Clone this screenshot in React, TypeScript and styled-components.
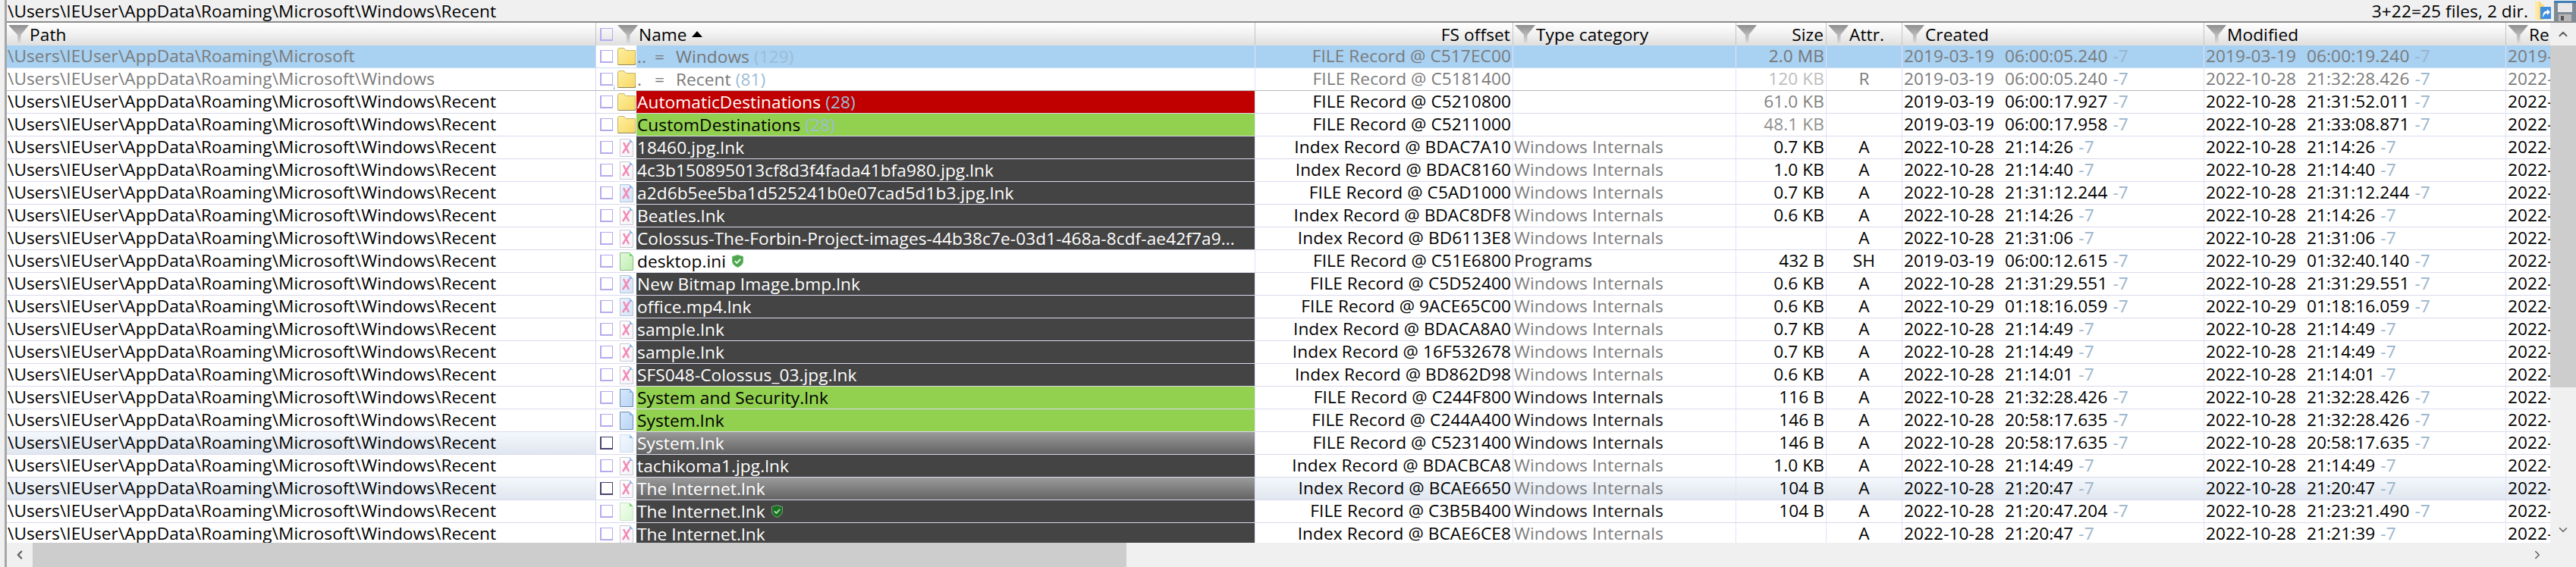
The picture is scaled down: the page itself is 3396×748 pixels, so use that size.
import React from 'react';
import styled, { createGlobalStyle, css } from 'styled-components';
import { ChevronUp, ChevronDown, ChevronLeft, ChevronRight } from 'lucide-react';

const GlobalStyle = createGlobalStyle`
    html, body {
        margin: 0;
        padding: 0;
        background: #f0f0f0;
        overflow: hidden;
    }
`;

const COLUMNS = '776px 869px 340px 294px 119px 100px 398px 398px 1fr';

const Shell = styled.div`
    width: 3396px;
    height: 748px;
    box-sizing: border-box;
    padding-left: 6px;
    display: flex;
    flex-direction: column;
    background: #f0f0f0;
    color: #000;
    font-family: 'Open Sans', 'Noto Sans', sans-serif;
    font-size: 22.67px;
    letter-spacing: 0.08px;
    overflow: hidden;
`;

const Frame = styled.div`
    flex: 1;
    min-height: 0;
    display: flex;
    flex-direction: column;
    border-left: 3px solid #a6a6a6;
`;

const TopBar = styled.div`
    height: 28px;
    flex: none;
    display: flex;
    align-items: center;
    padding-left: 1px;
    border-bottom: 2px solid #8c8c8c;
    white-space: nowrap;
`;

const TopStats = styled.div`
    margin-left: auto;
    margin-right: 8px;
`;

const TopIcons = styled.div`
    display: flex;
    align-items: center;
    gap: 4px;
`;

const Main = styled.div`
    flex: 1;
    min-height: 0;
    display: flex;
`;

const TableArea = styled.div`
    flex: 1;
    min-width: 0;
    display: flex;
    flex-direction: column;
`;

const Table = styled.div`
    flex: 1;
    min-height: 0;
    overflow: hidden;
    background: #fff;
`;

const HeaderRow = styled.div`
    height: 30px;
    display: grid;
    grid-template-columns: ${COLUMNS};
    background: linear-gradient(#ffffff, #f4f4f4 40%, #dfdfdf);
`;

const HeaderCell = styled.div<{ $right?: boolean }>`
    position: relative;
    display: flex;
    align-items: center;
    gap: 1px;
    padding: 0 3px 0 2px;
    border-left: 1px solid #c4c4c4;
    justify-content: ${(p) => (p.$right ? 'flex-end' : 'flex-start')};
    overflow: hidden;
    white-space: nowrap;

    &:first-child {
        border-left: 0;
    }
`;

const SizeFunnel = styled.div`
    position: absolute;
    left: 0;
    top: 3px;
    display: flex;
`;

const SortMark = styled.span`
    width: 0;
    height: 0;
    margin-left: 5px;
    border-left: 7px solid transparent;
    border-right: 7px solid transparent;
    border-bottom: 8px solid #000;
`;

const Row = styled.div<{ $selected?: boolean; $line: 'soft' | 'blue' | 'grey' }>`
    height: 30px;
    box-sizing: border-box;
    display: grid;
    grid-template-columns: ${COLUMNS};
    background: ${(p) => (p.$selected ? '#a8d1f2' : '#fff')};
    border-bottom: 1px solid
        ${(p) => (p.$line === 'grey' ? '#b9b9c2' : p.$line === 'blue' ? '#c9dff3' : '#dadaee')};
`;

const bandStyle = css`
    background: linear-gradient(#f4f8fc, #e0e6ef);
`;

const Cell = styled.div<{
    $align?: 'left' | 'right' | 'center';
    $tone?: string;
    $band?: boolean;
    $pad?: string;
}>`
    line-height: 28px;
    height: 29px;
    box-sizing: border-box;
    border-left: 1px solid #e2e2f8;
    padding: ${(p) => p.$pad || '0'};
    text-align: ${(p) => p.$align || 'left'};
    color: ${(p) => p.$tone || 'inherit'};
    white-space: nowrap;
    overflow: hidden;
    ${(p) => p.$band && bandStyle}

    &:first-child {
        border-left: 0;
    }
`;

const NameCell = styled.div`
    height: 29px;
    display: flex;
    border-left: 1px solid #d8d8ee;
    overflow: hidden;
`;

const Gutter = styled.div`
    width: 53px;
    flex: none;
    background: #fff;
    display: flex;
    align-items: flex-start;
    padding: 6px 0 0 5px;
    box-sizing: border-box;
    position: relative;
`;

const CheckBox = styled.span<{ $hot?: boolean }>`
    width: 17px;
    height: 17px;
    flex: none;
    box-sizing: border-box;
    background: #fff;
    border: 1px solid ${(p) => (p.$hot ? '#46436f' : '#b3abf0')};
    border-width: 1px 1px 2px 2px;
    margin-right: 6px;
`;

const HeaderCheck = styled(CheckBox)`
    margin: 0 5px 0 3px;
    background: transparent;
`;

const NestMark = styled.span`
    position: absolute;
    left: 21px;
    bottom: 0;
    font-size: 10px;
    line-height: 10px;
    color: #4f86d8;
`;

const IconSlot = styled.span`
    margin-top: -3px;
    width: 24px;
    display: flex;
    justify-content: center;
    flex: none;
`;

const fills = {
    none: css`
        color: #777;
    `,
    red: css`
        background: #c00000;
        color: #fff;
    `,
    green: css`
        background: #92d050;
        color: #000;
    `,
    dark: css`
        background: #444444;
        color: #fff;
    `,
    hot: css`
        background: linear-gradient(#9b9b9b, #636363);
        color: #fff;
    `,
    plain: css`
        color: #000;
    `,
};

type Fill = keyof typeof fills;

const NameFill = styled.div<{ $fill: Fill }>`
    flex: 1;
    min-width: 0;
    display: flex;
    align-items: center;
    line-height: 28px;
    padding-left: 1px;
    white-space: nowrap;
    overflow: hidden;
    ${(p) => fills[p.$fill]}
`;

const Dots = styled.span`
    width: 23px;
    flex: none;
`;

const Equals = styled.span`
    width: 28px;
    flex: none;
`;

const Count = styled.span`
    margin-left: 6px;
    color: #9dbdd6;
`;

const DateText = styled.span`
    margin-right: 14px;
`;

const Zone = styled.span`
    margin-left: 7px;
    color: #9ab4cb;
`;

const VScroll = styled.div`
    width: 34px;
    flex: none;
    display: flex;
    flex-direction: column;
    background: #f0f0f0;
`;

const ArrowBox = styled.div<{ $h: number; $w?: number }>`
    height: ${(p) => p.$h}px;
    width: ${(p) => (p.$w ? `${p.$w}px` : 'auto')};
    flex: none;
    display: flex;
    align-items: center;
    justify-content: center;
    color: #606060;
`;

const VThumb = styled.div`
    height: 451px;
    flex: none;
    background: #cdcdcd;
`;

const Spacer = styled.div`
    flex: 1;
`;

const HScroll = styled.div`
    height: 32px;
    flex: none;
    display: flex;
    background: #f0f0f0;
`;

const HThumb = styled.div`
    width: 1442px;
    background: #cdcdcd;
`;

const Funnel = () => (
    <svg width="27" height="25" viewBox="0 0 27 25" style={{ flex: 'none' }}>
        <defs>
            <linearGradient id="funnelFill" x1="0" y1="0" x2="0" y2="1">
                <stop offset="0" stopColor="#8e8e8e" />
                <stop offset="1" stopColor="#dcdcdc" />
            </linearGradient>
        </defs>
        <path d="M0 0H27L16.5 13V24H12V13Z" fill="url(#funnelFill)" />
    </svg>
);

const FolderIcon = () => (
    <svg width="24" height="23" viewBox="0 0 24 23">
        <defs>
            <linearGradient id="folderFill" x1="0" y1="0" x2="1" y2="1">
                <stop offset="0" stopColor="#fdf0a0" />
                <stop offset="1" stopColor="#f8d765" />
            </linearGradient>
        </defs>
        <path d="M.5 22.5V3C.5 1.5 1.5.5 3 .5H8C9.5.5 10 3.5 11.5 3.5H23.5V22.5Z" fill="url(#folderFill)" stroke="#c4b36c" />
        <path d="M1 22.5H23.5V20" fill="none" stroke="#8b8460" />
    </svg>
);

type PageKind = 'white' | 'blue' | 'strong' | 'pale' | 'green' | 'paleGreen';

const pageColors: Record<PageKind, [string, string, string]> = {
    white: ['#ffffff', '#f3f3f8', '#c8c8d6'],
    blue: ['#eaf3fd', '#d3e4f8', '#b4c4da'],
    strong: ['#d7e8fb', '#b8d4f4', '#6f8cae'],
    pale: ['#f3f8fe', '#deebfa', '#d0deee'],
    green: ['#e4f9dc', '#bdeeb0', '#8fb98a'],
    paleGreen: ['#f3fdf0', '#d9f7d2', '#c8e6c4'],
};

const PageIcon = ({ kind, cross }: { kind: PageKind; cross?: boolean }) => {
    const [from, to, edge] = pageColors[kind];
    const id = `page-${kind}`;
    return (
        <svg width="18" height="24" viewBox="0 0 18 24">
            <defs>
                <linearGradient id={id} x1="0" y1="0" x2="1" y2="1">
                    <stop offset="0" stopColor={from} />
                    <stop offset="1" stopColor={to} />
                </linearGradient>
            </defs>
            <path d="M.5.5H13L17.5 5V23.5H.5Z" fill={`url(#${id})`} stroke={edge} />
            <path d="M13 .5V5H17.5Z" fill={kind === 'green' || kind === 'paleGreen' ? '#6fd86a' : '#7db8ee'} />
            {cross && (
                <path d="M5 5L12 19M13 5L4 19" stroke="#f28ab5" strokeWidth="2.4" fill="none" />
            )}
        </svg>
    );
};

const ShieldIcon = ({ dark }: { dark?: boolean }) => (
    <svg width="15" height="17" viewBox="0 0 15 17" style={{ marginLeft: 8, flex: 'none' }}>
        <path
            d="M7.5.5L14.5 2.5V8.5C14.5 12.5 11 15 7.5 16.5C4 15 .5 12.5 .5 8.5V2.5Z"
            fill={dark ? '#17711f' : '#4ea64e'}
            stroke={dark ? '#8a9a8a' : '#6fba6f'}
        />
        <path d="M3.8 8.3L6.5 11L11.2 5.8" fill="none" stroke={dark ? '#b8d8b8' : '#ffffff'} strokeWidth="1.8" />
    </svg>
);

const ShortcutFolder = () => (
    <svg width="22" height="26" viewBox="0 0 22 26">
        <path d="M1 25V1H8L10 5H13V25Z" fill="#f9d97a" />
        <path d="M1 25V1H6V25Z" fill="#fde9a8" />
        <rect x="8" y="8" width="14" height="16" fill="#3f8ee0" />
        <path d="M11 22C11 16 13 13.5 17 13.5V11L21 15L17 19V16.5C14.5 16.5 13 18 11 22Z" fill="#fff" />
    </svg>
);

const FloppyIcon = () => (
    <svg width="29" height="27" viewBox="0 0 29 27">
        <path d="M0 0H29V27H0Z" fill="#7f8a94" />
        <rect x="0" y="0" width="29" height="3" fill="#3f7fb5" />
        <rect x="5" y="3" width="19" height="12" fill="#e8e8e8" />
        <rect x="6" y="18" width="17" height="9" fill="#b8b8b8" />
        <rect x="9" y="20" width="4" height="6" fill="#555" />
    </svg>
);

type Stamp = [string, string];

type RowData = {
    path: string;
    name: string;
    count?: number;
    prefix?: string;
    fill: Fill;
    icon: 'folder' | PageKind;
    cross?: boolean;
    shield?: 'light' | 'dark';
    record: string;
    category?: string;
    categoryDark?: boolean;
    size?: string;
    sizeTone?: string;
    attr?: string;
    created: Stamp;
    modified: Stamp;
    muted?: boolean;
    selected?: boolean;
    band?: 'path' | 'full';
};

const RECENT = '\\Users\\IEUser\\AppData\\Roaming\\Microsoft\\Windows\\Recent';
const WI = 'Windows Internals';

const lnk = (
    name: string,
    record: string,
    size: string | undefined,
    created: Stamp,
    modified: Stamp = created,
    icon: PageKind = 'white',
): RowData => ({
    path: RECENT,
    name,
    fill: 'dark',
    icon,
    cross: true,
    record,
    category: WI,
    size,
    attr: 'A',
    created,
    modified,
});

const rows: RowData[] = [
    {
        path: '\\Users\\IEUser\\AppData\\Roaming\\Microsoft',
        prefix: '..',
        name: 'Windows',
        count: 129,
        fill: 'none',
        icon: 'folder',
        record: 'FILE Record @ C517EC00',
        size: '2.0 MB',
        sizeTone: '#777',
        created: ['2019-03-19', '06:00:05.240'],
        modified: ['2019-03-19', '06:00:19.240'],
        muted: true,
        selected: true,
    },
    {
        path: '\\Users\\IEUser\\AppData\\Roaming\\Microsoft\\Windows',
        prefix: '.',
        name: 'Recent',
        count: 81,
        fill: 'none',
        icon: 'folder',
        record: 'FILE Record @ C5181400',
        size: '120 KB',
        sizeTone: '#bdbdbd',
        attr: 'R',
        created: ['2019-03-19', '06:00:05.240'],
        modified: ['2022-10-28', '21:32:28.426'],
        muted: true,
    },
    {
        path: RECENT,
        name: 'AutomaticDestinations',
        count: 28,
        fill: 'red',
        icon: 'folder',
        record: 'FILE Record @ C5210800',
        size: '61.0 KB',
        sizeTone: '#808080',
        created: ['2019-03-19', '06:00:17.927'],
        modified: ['2022-10-28', '21:31:52.011'],
    },
    {
        path: RECENT,
        name: 'CustomDestinations',
        count: 28,
        fill: 'green',
        icon: 'folder',
        record: 'FILE Record @ C5211000',
        size: '48.1 KB',
        sizeTone: '#909090',
        created: ['2019-03-19', '06:00:17.958'],
        modified: ['2022-10-28', '21:33:08.871'],
    },
    lnk('18460.jpg.lnk', 'Index Record @ BDAC7A10', '0.7 KB', ['2022-10-28', '21:14:26']),
    lnk('4c3b150895013cf8d3f4fada41bfa980.jpg.lnk', 'Index Record @ BDAC8160', '1.0 KB', ['2022-10-28', '21:14:40']),
    lnk('a2d6b5ee5ba1d525241b0e07cad5d1b3.jpg.lnk', 'FILE Record @ C5AD1000', '0.7 KB', ['2022-10-28', '21:31:12.244'], undefined, 'blue'),
    lnk('Beatles.lnk', 'Index Record @ BDAC8DF8', '0.6 KB', ['2022-10-28', '21:14:26']),
    lnk('Colossus-The-Forbin-Project-images-44b38c7e-03d1-468a-8cdf-ae42f7a9...', 'Index Record @ BD6113E8', undefined, ['2022-10-28', '21:31:06']),
    {
        path: RECENT,
        name: 'desktop.ini',
        fill: 'plain',
        icon: 'green',
        shield: 'light',
        record: 'FILE Record @ C51E6800',
        category: 'Programs',
        categoryDark: true,
        size: '432 B',
        attr: 'SH',
        created: ['2019-03-19', '06:00:12.615'],
        modified: ['2022-10-29', '01:32:40.140'],
    },
    lnk('New Bitmap Image.bmp.lnk', 'FILE Record @ C5D52400', '0.6 KB', ['2022-10-28', '21:31:29.551'], undefined, 'blue'),
    lnk('office.mp4.lnk', 'FILE Record @ 9ACE65C00', '0.6 KB', ['2022-10-29', '01:18:16.059'], undefined, 'blue'),
    lnk('sample.lnk', 'Index Record @ BDACA8A0', '0.7 KB', ['2022-10-28', '21:14:49']),
    lnk('sample.lnk', 'Index Record @ 16F532678', '0.7 KB', ['2022-10-28', '21:14:49']),
    lnk('SFS048-Colossus_03.jpg.lnk', 'Index Record @ BD862D98', '0.6 KB', ['2022-10-28', '21:14:01']),
    {
        ...lnk('System and Security.lnk', 'FILE Record @ C244F800', '116 B', ['2022-10-28', '21:32:28.426'], undefined, 'strong'),
        fill: 'green',
        cross: false,
        categoryDark: true,
    },
    {
        ...lnk('System.lnk', 'FILE Record @ C244A400', '146 B', ['2022-10-28', '20:58:17.635'], ['2022-10-28', '21:32:28.426'], 'strong'),
        fill: 'green',
        cross: false,
        categoryDark: true,
    },
    {
        ...lnk('System.lnk', 'FILE Record @ C5231400', '146 B', ['2022-10-28', '20:58:17.635'], undefined, 'pale'),
        fill: 'hot',
        cross: false,
        categoryDark: true,
        band: 'path',
    },
    lnk('tachikoma1.jpg.lnk', 'Index Record @ BDACBCA8', '1.0 KB', ['2022-10-28', '21:14:49']),
    {
        ...lnk('The Internet.lnk', 'Index Record @ BCAE6650', '104 B', ['2022-10-28', '21:20:47']),
        fill: 'hot',
        band: 'full',
    },
    {
        ...lnk('The Internet.lnk', 'FILE Record @ C3B5B400', '104 B', ['2022-10-28', '21:20:47.204'], ['2022-10-28', '21:23:21.490'], 'paleGreen'),
        cross: false,
        shield: 'dark',
        categoryDark: true,
    },
    lnk('The Internet.lnk', 'Index Record @ BCAE6CE8', undefined, ['2022-10-28', '21:20:47'], ['2022-10-28', '21:21:39']),
];

const StampText = ({ value }: { value: Stamp }) => (
    <>
        <DateText>{value[0]}</DateText>
        {value[1]}
        <Zone>-7</Zone>
    </>
);

const TableRow = ({ row, index }: { row: RowData; index: number }) => {
    const tone = row.muted ? '#7b7b7b' : undefined;
    const full = row.band === 'full';
    const categoryTone = row.categoryDark ? '#1c1c1c' : '#808080';
    return (
        <Row $selected={row.selected} $line={index === 0 ? 'blue' : index === 1 ? 'grey' : 'soft'}>
            <Cell $tone={tone} $band={!!row.band} $pad="0 0 0 1px">
                {row.path}
            </Cell>
            <NameCell>
                <Gutter>
                    <CheckBox $hot={!!row.band} />
                    <IconSlot>
                        {row.icon === 'folder' ? <FolderIcon /> : <PageIcon kind={row.icon} cross={row.cross} />}
                    </IconSlot>
                    {index === 1 && <NestMark>↓</NestMark>}
                </Gutter>
                <NameFill $fill={row.fill}>
                    {row.prefix && (
                        <>
                            <Dots>{row.prefix}</Dots>
                            <Equals>=</Equals>
                        </>
                    )}
                    {row.name}
                    {row.count !== undefined && <Count>({row.count})</Count>}
                    {row.shield && <ShieldIcon dark={row.shield === 'dark'} />}
                </NameFill>
            </NameCell>
            <Cell $align="right" $tone={tone} $band={full} $pad="0 2px 0 0">
                {row.record}
            </Cell>
            <Cell $tone={categoryTone} $band={full} $pad="0 0 0 1px">
                {row.category}
            </Cell>
            <Cell $align="right" $tone={row.sizeTone} $band={full} $pad="0 2px 0 0">
                {row.size}
            </Cell>
            <Cell $align="center" $tone={tone} $band={full}>
                {row.attr}
            </Cell>
            <Cell $tone={tone} $band={full} $pad="0 0 0 2px">
                <StampText value={row.created} />
            </Cell>
            <Cell $tone={tone} $band={full} $pad="0 0 0 2px">
                <StampText value={row.modified} />
            </Cell>
            <Cell $tone={tone} $band={full} $pad="0 0 0 2px">
                {row.modified[0]}
            </Cell>
        </Row>
    );
};

export default function App() {
    return (
        <Shell>
            <GlobalStyle />
            <Frame>
                <TopBar>
                    {RECENT}
                    <TopStats>3+22=25 files, 2 dir.</TopStats>
                    <TopIcons>
                        <ShortcutFolder />
                        <FloppyIcon />
                    </TopIcons>
                </TopBar>
                <Main>
                    <TableArea>
                        <Table>
                            <HeaderRow>
                                <HeaderCell>
                                    <Funnel />
                                    Path
                                </HeaderCell>
                                <HeaderCell>
                                    <HeaderCheck />
                                    <Funnel />
                                    Name
                                    <SortMark />
                                </HeaderCell>
                                <HeaderCell $right>FS offset</HeaderCell>
                                <HeaderCell>
                                    <Funnel />
                                    Type category
                                </HeaderCell>
                                <HeaderCell $right>
                                    <SizeFunnel>
                                        <Funnel />
                                    </SizeFunnel>
                                    Size
                                </HeaderCell>
                                <HeaderCell>
                                    <Funnel />
                                    Attr.
                                </HeaderCell>
                                <HeaderCell>
                                    <Funnel />
                                    Created
                                </HeaderCell>
                                <HeaderCell>
                                    <Funnel />
                                    Modified
                                </HeaderCell>
                                <HeaderCell>
                                    <Funnel />
                                    Re
                                </HeaderCell>
                            </HeaderRow>
                            {rows.map((row, i) => (
                                <TableRow key={i} row={row} index={i} />
                            ))}
                        </Table>
                        <HScroll>
                            <ArrowBox $h={32} $w={34}>
                                <ChevronLeft size={18} strokeWidth={3} />
                            </ArrowBox>
                            <HThumb />
                            <Spacer />
                            <ArrowBox $h={32} $w={34}>
                                <ChevronRight size={18} strokeWidth={2} />
                            </ArrowBox>
                        </HScroll>
                    </TableArea>
                    <VScroll>
                        <ArrowBox $h={30}>
                            <ChevronUp size={18} strokeWidth={2.5} />
                        </ArrowBox>
                        <VThumb />
                        <Spacer />
                        <ArrowBox $h={34}>
                            <ChevronDown size={18} strokeWidth={2} />
                        </ArrowBox>
                        <ArrowBox $h={32} />
                    </VScroll>
                </Main>
            </Frame>
        </Shell>
    );
}
